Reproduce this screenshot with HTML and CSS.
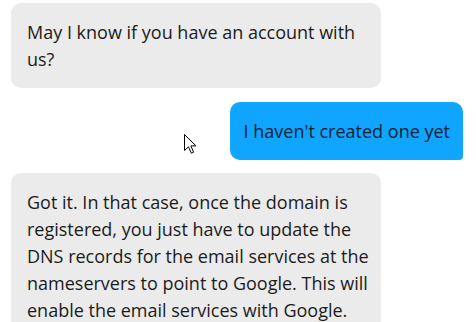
FILE: index.html
```html
<!DOCTYPE html>
<html>
<head>
<meta charset="utf-8">
<link rel="stylesheet" href="styles.css">
</head>
<body>
<div class="chat">
  <div class="msg bot first">May I know if you have an account with us?</div>
  <div class="msg user">I haven't created one yet</div>
  <div class="msg bot last">Got it. In that case, once the domain is registered, you just have to update the DNS records for the email services at the nameservers to point to Google. This will enable the email services with Google.</div>
</div>
<svg class="cursor" width="13" height="20" viewBox="0 0 13 20">
  <path d="M0.5 0.5 L0.5 16.5 L4.5 12.8 L7.3 19.2 L9.6 18.2 L6.9 11.9 L12 11.9 Z" fill="#fff" stroke="#000" stroke-width="1" stroke-linejoin="miter"/>
</svg>
</body>
</html>
```

FILE: styles.css
```css
html, body {
  margin: 0;
  padding: 0;
  background: #ffffff;
  overflow: hidden;
}
body {
  position: relative;
  width: 476px;
  height: 322px;
  font-family: "Open Sans", "Noto Sans", sans-serif;
  font-size: 18px;
  line-height: 27px;
  color: #1b1b1b;
}
.chat {
  display: flex;
  flex-direction: column;
  height: 319px;
  overflow: hidden;
  padding: 3px 13px 0 11px;
}
.msg {
  flex-shrink: 0;
  padding: 16px 12px 15px 16px;
  border-radius: 10px;
  box-sizing: border-box;
}
.bot {
  align-self: flex-start;
  width: 370px;
  background: #ebebeb;
}
.user {
  align-self: flex-end;
  margin-top: 14px;
  padding-left: 14px;
  padding-right: 13px;
  background: #10a5ff;
  color: #0b2233;
  border-radius: 10px 10px 4px 10px;
}
.last {
  margin-top: 13px;
}
.cursor {
  position: absolute;
  left: 184px;
  top: 134px;
}
```
